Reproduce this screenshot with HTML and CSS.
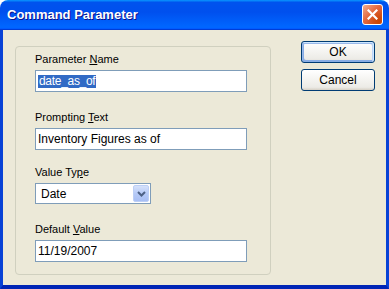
FILE: index.html
```html
<!DOCTYPE html>
<html lang="en">
<head>
    <meta charset="UTF-8">
    <meta name="viewport" content="width=device-width, initial-scale=1.0">
    <title>Command Parameter</title>
    <link rel="stylesheet" href="styles.css">
</head>
<body>

    <div class="window">

        <!-- Title bar -->
        <div class="titlebar">
            <span class="title">Command Parameter</span>
            <button class="close" aria-label="Close">
                <svg width="11" height="11" viewBox="0 0 11 11">
                    <path d="M1.5 1.5 L9.5 9.5 M9.5 1.5 L1.5 9.5" stroke="#fff" stroke-width="2.2" stroke-linecap="square" fill="none"/>
                </svg>
            </button>
        </div>

        <div class="client">

            <!-- Fields -->
            <div class="group">
                <div class="label first">Parameter <u>N</u>ame</div>
                <div class="textbox"><span class="selected">date_as_of</span></div>

                <div class="label second">Prompting <u>T</u>ext</div>
                <div class="textbox">Inventory Figures as of</div>

                <div class="label third">Value Ty<u>p</u>e</div>
                <div class="combo">
                    <span class="combo-text">Date</span>
                    <span class="combo-btn">
                        <svg width="9" height="6" viewBox="0 0 9 6">
                            <path d="M1 1 L4.5 4.5 L8 1" stroke="#4d6185" stroke-width="2" fill="none"/>
                        </svg>
                    </span>
                </div>

                <div class="label fourth">Default <u>V</u>alue</div>
                <div class="textbox">11/19/2007</div>
            </div>

            <!-- Buttons -->
            <div class="buttons">
                <button class="btn default">OK</button>
                <button class="btn">Cancel</button>
            </div>

        </div>
    </div>

</body>
</html>
```

FILE: styles.css
```css
body { margin: 0; background: #fff; font-family: "Liberation Sans", Arial, sans-serif; font-size: 11px; color: #000; }
.window { width: 389px; height: 289px; display: flex; flex-direction: column; }

.titlebar { height: 30px; flex: none; display: flex; align-items: center; justify-content: space-between; padding: 0 6px 0 7px; box-sizing: border-box; border-radius: 8px 8px 0 0; background: linear-gradient(180deg, #0997ff, #0053ee 8%, #0050ee 40%, #0066ff 88%, #0066ff 93%, #005bff 95%, #003dd7 96%, #003dd7); }
.title { color: #fff; font-weight: bold; font-size: 13px; text-shadow: 1px 1px #0f1089; margin-top: -1px; }
.close { width: 21px; height: 21px; padding: 0; margin-top: -1px; border: 1px solid #fff; border-radius: 3px; display: flex; align-items: center; justify-content: center; background: radial-gradient(circle at 85% 85%, #cc4600, transparent 55%), linear-gradient(135deg, #f2ad90, #e4683e 45%, #cf4c1f); }

.client { flex: 1; display: flex; align-items: flex-start; padding: 11px 0 0 12px; background: #ece9d8; border-left: 3px solid #0842d6; border-right: 3px solid #0842d6; border-bottom: 4px solid #0025b5; }

.group { width: 256px; height: 229px; margin-top: 5px; box-sizing: border-box; border: 1px solid #d0d0bf; border-radius: 4px; padding: 6px 19px 0 19px; }
.label { height: 13px; line-height: 13px; }
.label.second { margin-top: 19px; }
.label.third { margin-top: 16px; }
.label.fourth { margin-top: 19px; }

.textbox { width: 212px; height: 22px; margin-top: 4px; box-sizing: border-box; border: 1px solid #7f9db9; background: #fff; display: flex; align-items: center; padding-left: 2px; white-space: nowrap; font-size: 12px; }
.selected { background: #316ac5; color: #fff; line-height: 13px; padding: 0 1px; letter-spacing: -0.3px; }

.combo { width: 116px; height: 21px; margin-top: 4px; box-sizing: border-box; border: 1px solid #7f9db9; background: #fff; display: flex; align-items: center; justify-content: space-between; padding: 1px; font-size: 12px; }
.combo-text { padding-left: 4px; }
.combo-btn { width: 16px; height: 17px; box-sizing: border-box; border: 1px solid #bccff6; border-radius: 2px; display: flex; align-items: center; justify-content: center; background: linear-gradient(180deg, #d6e2fb, #b6caf7 50%, #a8bff4); }

.buttons { margin-left: 30px; display: flex; flex-direction: column; gap: 6px; }
.btn { width: 74px; height: 22px; padding: 0; border: 1px solid #003c74; border-radius: 3px; font-family: "Liberation Sans", Arial, sans-serif; font-size: 12px; color: #000; background: linear-gradient(180deg, #fff, #ecebe6 86%, #d6d0c5); }
.btn.default { box-shadow: inset -1px 1px #cee7ff, inset 1px 2px #98b8ea, inset -2px 2px #bcd4f6, inset 1px -1px #89ade4, inset 2px -2px #89ade4; }
```
